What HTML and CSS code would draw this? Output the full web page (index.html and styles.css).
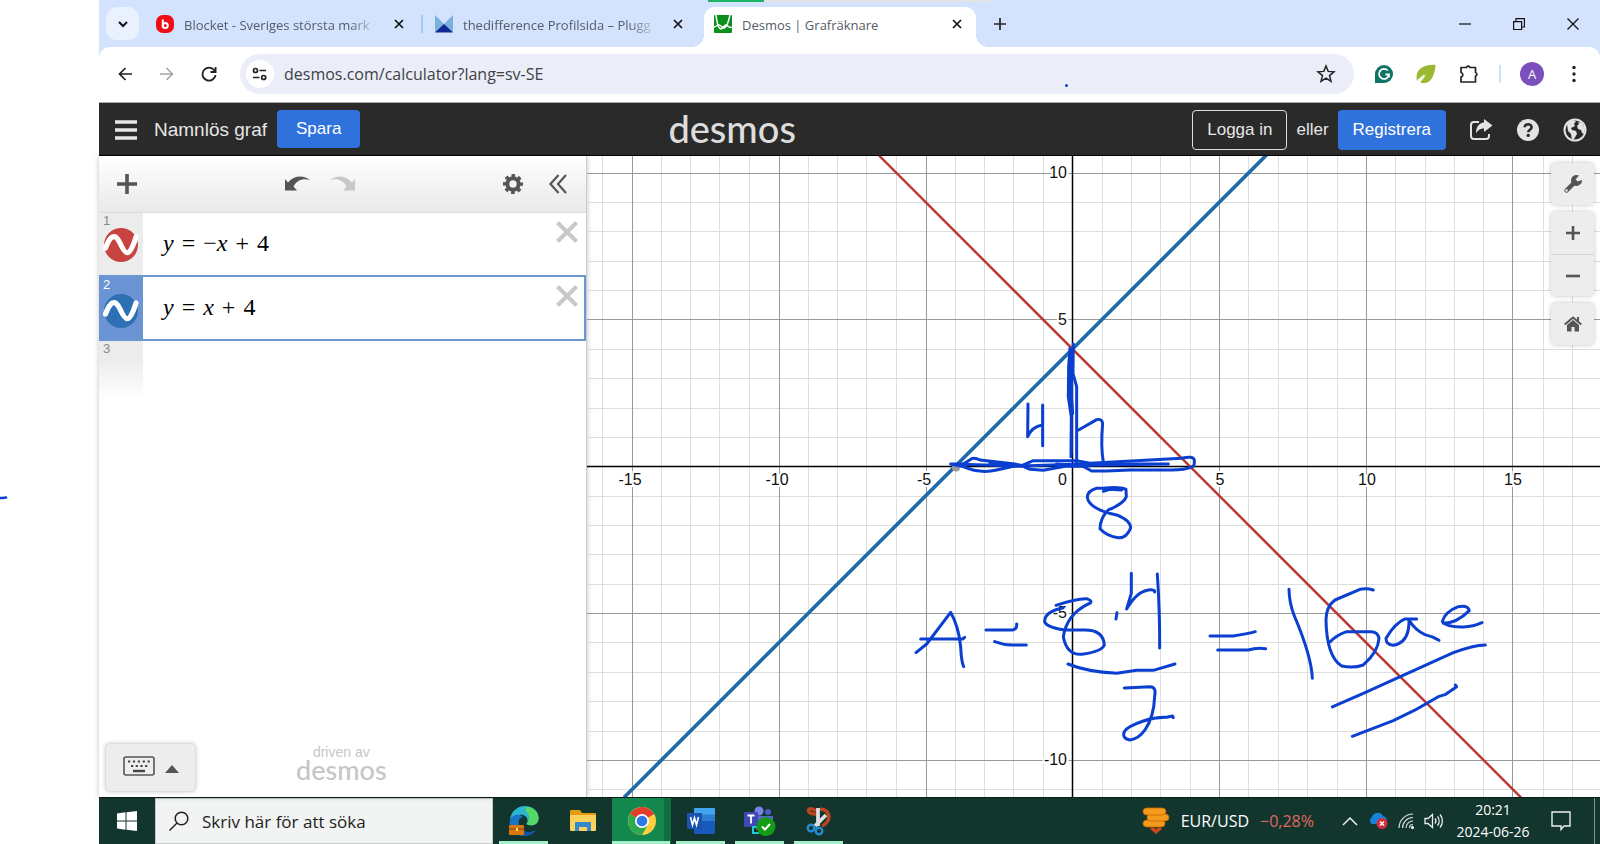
FILE: index.html
```html
<!DOCTYPE html>
<html lang="sv">
<head>
<meta charset="utf-8">
<title>Desmos | Grafräknare</title>
<meta name="viewport" content="width=device-width, initial-scale=1">
<link rel="stylesheet" href="styles.css">
</head>
<body>
<div class="screen">
  <header class="tabstrip">
    <button class="tab-search" aria-label="Sök flikar"><svg width="12" height="12" viewBox="0 0 12 12"><path d="M2 4l4 4 4-4" fill="none" stroke="#111" stroke-width="2"/></svg></button>
    <div class="tab">
      <svg class="favicon" width="18" height="18" viewBox="0 0 18 18"><rect width="18" height="18" rx="7" fill="#f00d16"/><path d="M6.800 4.500v8" stroke="#fff" stroke-width="2"/><circle cx="9.300" cy="10.500" r="2.500" fill="none" stroke="#fff" stroke-width="2"/></svg>
      <span class="tab-title fade">Blocket - Sveriges största mark</span>
      <button class="tab-close" aria-label="Stäng"><svg width="12" height="12" viewBox="0 0 12 12"><path d="M2 2l8 8M10 2l-8 8" stroke="#111" stroke-width="1.700"/></svg></button>
    </div>
    <div class="tab">
      <svg class="favicon" width="18" height="18" viewBox="0 0 18 18"><path d="M0 0l9 9 9-9v17H0z" fill="#7bb0da"/><path d="M0 17.500L9 9l9 8.500z" fill="#102a92"/></svg>
      <span class="tab-title fade">thedifference Profilsida – Plugg</span>
      <button class="tab-close" aria-label="Stäng"><svg width="12" height="12" viewBox="0 0 12 12"><path d="M2 2l8 8M10 2l-8 8" stroke="#111" stroke-width="1.700"/></svg></button>
    </div>
    <div class="tab active">
      <svg class="favicon" width="18" height="18" viewBox="0 0 18 18"><rect width="18" height="18" rx="1" fill="#0a8f1c"/><path d="M2 0c1 9 3 14 5 14s3-4 5-4 3 4 6 2M16 0c-2 9-4 13-6 13s-3-3-5-3-3 2-5 2" fill="none" stroke="#fff" stroke-width="1.500"/></svg>
      <span class="tab-title">Desmos | Grafräknare</span>
      <button class="tab-close" aria-label="Stäng"><svg width="12" height="12" viewBox="0 0 12 12"><path d="M2 2l8 8M10 2l-8 8" stroke="#111" stroke-width="1.700"/></svg></button>
    </div>
    <button class="new-tab" aria-label="Ny flik"><svg width="14" height="14" viewBox="0 0 14 14"><path d="M7 1v12M1 7h12" stroke="#222" stroke-width="1.700"/></svg></button>
    <div class="window-controls">
      <button aria-label="Minimera"><svg width="12" height="12" viewBox="0 0 12 12"><path d="M0 6h12" stroke="#111" stroke-width="1.200"/></svg></button>
      <button aria-label="Återställ"><svg width="12" height="12" viewBox="0 0 12 12"><path d="M.6 3.600h8v8h-8zM3 3V.6h8.400V9H9" fill="none" stroke="#111" stroke-width="1.200"/></svg></button>
      <button aria-label="Stäng fönster"><svg width="12" height="12" viewBox="0 0 12 12"><path d="M.5.5l11 11M11.500.5l-11 11" stroke="#111" stroke-width="1.300"/></svg></button>
    </div>
  </header>

  <div class="toolbar-bg">
  <nav class="toolbar">
    <button class="tool" aria-label="Bakåt"><svg width="14" height="14" viewBox="0 0 14 14"><path d="M14 7H1.500M7.500 1l-6 6 6 6" fill="none" stroke="#222" stroke-width="1.700"/></svg></button>
    <button class="tool" aria-label="Framåt"><svg width="14" height="14" viewBox="0 0 14 14"><path d="M0 7h12.500M6.500 1l6 6-6 6" fill="none" stroke="#a3a5a8" stroke-width="1.600"/></svg></button>
    <button class="tool" aria-label="Läs in igen"><svg width="16" height="16" viewBox="0 0 16 16"><path d="M14 5.500A6.500 6.500 0 1 0 14.500 9M14.600 1v5H9.500" fill="none" stroke="#222" stroke-width="1.800"/></svg></button>
    <div class="omnibox">
      <button class="site-info" aria-label="Webbplatsinformation"><svg width="16" height="14" viewBox="0 0 16 14"><g fill="none" stroke="#222" stroke-width="1.700"><circle cx="3.500" cy="3.500" r="2"/><path d="M7.500 3.500H14M1 10.500h6.500"/><circle cx="11.700" cy="10.500" r="2"/></g></svg></button>
      <input class="url" type="text" aria-label="Adressfält" value="desmos.com/calculator?lang=sv-SE">
      <button class="star" aria-label="Bokmärk"><svg width="20" height="20" viewBox="0 0 20 20"><path d="M10 2l2.200 5.400 5.800.4-4.500 3.800 1.500 5.800-5-3.200-5 3.200 1.500-5.800L2 7.800l5.800-.4z" fill="none" stroke="#222" stroke-width="1.500"/></svg></button>
    </div>
    <button class="tool" aria-label="Grammarly"><svg width="18" height="18" viewBox="0 0 18 18"><path d="M9 0a9 9 0 1 1 0 18H0V9a9 9 0 0 1 9-9z" fill="#0f7465"/><path d="M12.700 5.500A5 5 0 1 0 14 9.500h-3.500M13.900 9.500v3" fill="none" stroke="#fff" stroke-width="1.800"/></svg></button>
    <button class="tool" aria-label="Tillägg"><svg width="20" height="20" viewBox="0 0 20 20"><path d="M1 17C-1 8 4 0 19.500.8 19 12 14 22 4 18.500l6-7z" fill="#99b933"/><path d="M1.500 16.500l7-5.500" stroke="#fff" stroke-width="1.500"/></svg></button>
    <button class="tool" aria-label="Alla tillägg"><svg width="22" height="20" viewBox="0 0 22 20"><path d="M4 3.500h5.500a1.800 1.800 0 0 1 3.500 0H18.500V8.500a1.800 1.800 0 0 1 0 3.500V18H4v-5a2.300 2.300 0 0 0 0-4.500z" fill="none" stroke="#222" stroke-width="1.700" stroke-linejoin="round"/></svg></button>
    <span class="tool-divider"></span>
    <button class="tool" aria-label="Profil"><span class="avatar">A</span></button>
    <button class="tool" aria-label="Meny"><svg width="4" height="18" viewBox="0 0 4 18"><g fill="#222"><circle cx="2" cy="2.500" r="1.700"/><circle cx="2" cy="9" r="1.700"/><circle cx="2" cy="15.500" r="1.700"/></g></svg></button>
  </nav>
  </div>

  <header class="app-header">
    <button class="menu" aria-label="Öppna graf"><svg width="22" height="20" viewBox="0 0 22 20"><path d="M0 2h22M0 10h22M0 18h22" stroke="#e6e6e6" stroke-width="3.400"/></svg></button>
    <span class="graph-name">Namnlös graf</span>
    <button class="btn primary save">Spara</button>
    <span class="logo">desmos</span>
    <div class="account">
      <button class="btn outline">Logga in</button>
      <span class="or">eller</span>
      <button class="btn primary">Registrera</button>
    </div>
    <div class="header-icons">
      <button aria-label="Dela"><svg width="24" height="22" viewBox="0 0 24 22"><path d="M10 3H5a3 3 0 0 0-3 3v11a3 3 0 0 0 3 3h12a3 3 0 0 0 3-3v-2" fill="none" stroke="#e3e3e3" stroke-width="2"/><path d="M15 0l8.500 6.500L15 13V9.500c-4 0-6 1.500-8 5C7 8 10 4 15 3.600z" fill="#e3e3e3"/></svg></button>
      <button aria-label="Hjälp"><svg width="22" height="22" viewBox="0 0 22 22"><circle cx="11" cy="11" r="11" fill="#e3e3e3"/><path d="M7.600 8.300c.2-4 7-4 7-.1 0 2.500-3.400 2.500-3.400 5" fill="none" stroke="#2a2a2a" stroke-width="2.600"/><circle cx="11.200" cy="16.400" r="1.700" fill="#2a2a2a"/></svg></button>
      <button aria-label="Språk"><svg width="24" height="24" viewBox="0 0 24 24"><circle cx="12" cy="12" r="10.500" fill="none" stroke="#e3e3e3" stroke-width="2"/><path d="M4 6l5-4 4 1-2 3 1 2-4 2 1 2 4 1 1 3-3 5-2 1-1-6-3-3zM15 4l4 1 3 6-1 5-2-1-1-3-3-1-1-3 2-2z" fill="#e3e3e3"/></svg></button>
    </div>
  </header>

  <main class="calculator">
    <section class="expressions">
      <div class="exp-toolbar">
        <button class="add" aria-label="Lägg till"><svg width="20" height="20" viewBox="0 0 20 20"><path d="M10 0v20M0 10h20" stroke="#555" stroke-width="3.600"/></svg></button>
        <div class="history">
          <button aria-label="Ångra"><svg width="25" height="16" viewBox="0 0 25 16"><path d="M0 3l3 3.500C9-1 19-1 25 4 18 2 12 4 8.500 10.500L12 14.500H0z" fill="#555"/></svg></button>
          <button aria-label="Gör om"><svg width="25" height="16" viewBox="0 0 25 16"><path d="M25 3l-3 3.500C16-1 6-1 0 4c7-2 13 0 16.500 6.500L13 14.500h12z" fill="#c8c8c8"/></svg></button>
        </div>
        <div class="panel-actions">
          <button aria-label="Redigera lista"><svg width="20" height="20" viewBox="0 0 20 20"><circle cx="10" cy="10" r="5.700" fill="none" stroke="#555" stroke-width="4"/><circle cx="10" cy="10" r="8.500" fill="none" stroke="#555" stroke-width="3" stroke-dasharray="3.600 3.076" stroke-dashoffset="1.800"/></svg></button>
          <button aria-label="Dölj lista"><svg width="18" height="20" viewBox="0 0 18 20"><path d="M9.500 1L1.500 10l8 9M17 1l-8 9 8 9" fill="none" stroke="#555" stroke-width="2.200"/></svg></button>
        </div>
      </div>

      <div class="expression">
        <div class="gutter"><span>1</span>
          <button aria-label="Dölj graf 1"><svg width="36" height="34" viewBox="0 0 36 34"><circle cx="18" cy="17" r="17" fill="#c74440"/><path d="M2.500 20C7 8 12 4 17 15s9 17 16-6" fill="none" stroke="#fff" stroke-width="5.200" stroke-linecap="round"/></svg></button>
        </div>
        <div class="math" role="textbox" tabindex="0" aria-label="Uttryck 1"><i>y</i><span>=</span><span>−<i>x</i></span><span>+</span><span>4</span></div>
        <button class="remove" aria-label="Ta bort 1"><svg width="22" height="22" viewBox="0 0 22 22"><path d="M1.500 1.500l19 19M20.500 1.500l-19 19" stroke="#c8c8c8" stroke-width="4"/></svg></button>
      </div>
      <div class="expression selected">
        <div class="gutter"><span>2</span>
          <button aria-label="Dölj graf 2"><svg width="36" height="34" viewBox="0 0 36 34"><circle cx="18" cy="17" r="17" fill="#2d70b3"/><path d="M2.500 20C7 8 12 4 17 15s9 17 16-6" fill="none" stroke="#fff" stroke-width="5.200" stroke-linecap="round"/></svg></button>
        </div>
        <div class="math" role="textbox" tabindex="0" aria-label="Uttryck 2"><i>y</i><span>=</span><i>x</i><span>+</span><span>4</span></div>
        <button class="remove" aria-label="Ta bort 2"><svg width="22" height="22" viewBox="0 0 22 22"><path d="M1.500 1.500l19 19M20.500 1.500l-19 19" stroke="#c8c8c8" stroke-width="4"/></svg></button>
      </div>
      <div class="expression empty"><div class="gutter"><span>3</span></div></div>

      <footer class="panel-footer">
        <button class="keypad" aria-label="Visa tangentbord">
          <svg width="32" height="20" viewBox="0 0 32 20"><rect x="1" y="1" width="30" height="18" rx="2" fill="none" stroke="#555" stroke-width="1.600"/><path d="M5 5.500h22" stroke="#444" stroke-width="2.200" stroke-dasharray="2.200 2.700"/><path d="M8 10h17" stroke="#444" stroke-width="2.200" stroke-dasharray="2.200 2.500"/><path d="M10 15h12" stroke="#444" stroke-width="2.400"/></svg>
          <svg width="14" height="8" viewBox="0 0 14 8"><path d="M0 8l7-8 7 8z" fill="#555"/></svg>
        </button>
        <div class="powered"><span>driven av</span><span class="powered-logo">desmos</span></div>
      </footer>
    </section>

    <section class="graph">
      <svg class="plot" viewBox="587 156 1013 641" preserveAspectRatio="xMidYMid slice" role="img" aria-label="Graf av y = −x + 4 och y = x + 4">
        <path class="minor" d="M602.500 156v641M661.500 156v641M690.500 156v641M719.500 156v641M749.500 156v641M808.500 156v641M837.500 156v641M866.500 156v641M896.500 156v641M955.500 156v641M984.500 156v641M1013.500 156v641M1043.500 156v641M1102.500 156v641M1131.500 156v641M1160.500 156v641M1190.500 156v641M1248.500 156v641M1278.500 156v641M1307.500 156v641M1337.500 156v641M1395.500 156v641M1425.500 156v641M1454.500 156v641M1483.500 156v641M1543.500 156v641M1572.500 156v641"/>
        <path class="minor" d="M587 202.500h1013M587 231.500h1013M587 261.500h1013M587 290.500h1013M587 349.500h1013M587 378.500h1013M587 408.500h1013M587 437.500h1013M587 496.500h1013M587 525.500h1013M587 554.500h1013M587 584.500h1013M587 642.500h1013M587 672.500h1013M587 701.500h1013M587 731.500h1013M587 789.500h1013"/>
        <path class="major" d="M632.500 156v641M779.500 156v641M926.500 156v641M1219.500 156v641M1366.500 156v641M1512.500 156v641M587 173.500h1013M587 319.500h1013M587 613.500h1013M587 760.500h1013"/>
        <path class="axis" d="M1072.500 156v641M587 466.500h1013"/>
        <path d="M1072.500 349L624 797.500M1072.500 349L1268 153.500" stroke="#1e69ab" stroke-width="3.600"/>
        <path d="M879 155.500L1521.500 798" stroke="#bb3430" stroke-width="2.400"/>
        <g class="label">
          <g text-anchor="middle">
            <text x="630" y="485">-15</text><text x="777" y="485">-10</text><text x="924" y="485">-5</text>
            <text x="1220" y="485">5</text><text x="1367" y="485">10</text><text x="1513" y="485">15</text>
          </g>
          <g text-anchor="end">
            <text x="1067" y="485">0</text><text x="1067" y="178">10</text><text x="1067" y="325">5</text><text x="1067" y="618">-5</text><text x="1067" y="765">-10</text>
          </g>
        </g>
        <g class="ink">
          <circle cx="956" cy="467.500" r="4" fill="#999" stroke="none"/>
          <g transform="translate(900 330) scale(.3333)">
            <path d="M384 222L383 320Q396 290 427 285M428 225V347"/>
            <path d="M536 300L590 269Q606 265 608 280Q602 350 610 396"/>
            <path d="M510 55L506 110 505 200 514 260 513 380M520 42L519 130 530 170 530 400M515 60L514 370M508 120L518 250"/>
            <path d="M512 60L513 150" stroke-width="14"/>
            <path d="M152 402H190L215 386Q225 382 240 390L345 402 365 407 400 392H530L570 400 845 385Q880 376 883 390Q884 408 878 410Q850 422 800 420H690L620 423H575L550 409 500 408 430 421 390 418 365 407 340 409 290 420Q240 432 190 410Z"/>
            <path d="M180 403L365 408 545 402 805 402M560 406L805 402M270 399L390 408M470 402L560 408" stroke-width="11"/>
            <path d="M610 484L630 478 665 480M628 475H590Q563 482 562 502Q564 520 590 535Q610 547 650 555Q692 572 692 594Q680 625 655 623Q620 618 600 596Q600 565 625 540Q672 520 679 500L678 478Q660 470 615 474"/>
          </g>
          <g transform="translate(900 550) scale(.3333)">
            <path d="M48 308L80 282 152 187Q176 230 182 290Q184 335 191 350M62 267H188L194 262"/>
            <path d="M258 240H338Q352 237 350 222M284 275Q310 285 335 285H379"/>
            <path d="M468 166Q530 145 560 146Q585 155 562 163Q500 195 490 260Q500 315 545 313Q605 305 613 285Q610 240 555 240H495Q430 230 434 210Q438 184 490 173"/>
            <path d="M651 188L648 207M694 70V130L680 177Q710 125 745 120Q765 118 764 126M772 72Q780 190 779 294"/>
            <path d="M504 342Q560 365 650 370Q680 366 710 361H760L825 342"/>
            <path d="M673 414L750 410Q770 410 764 440Q762 500 735 540Q715 568 690 570Q665 565 673 545Q680 530 730 513Q765 501 800 502L818 498 820 503"/>
          </g>
          <g transform="translate(1190 560) scale(.3333)">
            <path d="M60 228H130Q170 222 196 215M83 270H175Q200 262 227 266"/>
            <path d="M297 88Q298 130 312 165Q365 290 367 355"/>
            <path d="M550 90Q530 84 510 88L435 120Q408 140 408 180Q410 290 455 318Q490 326 520 315Q565 275 567 235Q564 216 545 215H470Q440 225 420 246"/>
            <path d="M680 177H645Q615 190 588 235Q588 255 610 256Q655 248 657 190V180Q675 210 705 224Q730 230 747 241"/>
            <path d="M760 190Q800 190 838 152Q835 135 805 140Q765 155 757 185Q770 202 820 201Q850 200 876 188"/>
            <path d="M427 441L520 400 790 278Q850 256 886 255M487 529L610 482Q680 450 745 410L765 404 800 380 796 375"/>
          </g>
        </g>
      </svg>
      <div class="view-controls">
        <button class="control" aria-label="Inställningar"><svg width="20" height="20" viewBox="0 0 20 20"><path d="M3.500 16.500L12 8" stroke="#555" stroke-width="4.500" stroke-linecap="round"/><path d="M16 1.500A5.500 5.500 0 1 0 19 6l-4.500 1.500-2-2z" fill="#555"/><circle cx="3.500" cy="16.500" r="1.300" fill="#eee"/></svg></button>
        <div class="zoom-group">
          <button class="control" aria-label="Zooma in"><svg width="14" height="14" viewBox="0 0 14 14"><path d="M7 0v14M0 7h14" stroke="#555" stroke-width="2.600"/></svg></button>
          <button class="control" aria-label="Zooma ut"><svg width="14" height="14" viewBox="0 0 14 14"><path d="M0 7h14" stroke="#555" stroke-width="2.600"/></svg></button>
        </div>
        <button class="control" aria-label="Standardvy"><svg width="18" height="16" viewBox="0 0 18 16"><path d="M.7 8.500L9 1.500l8.300 7M14 1v4" fill="none" stroke="#555" stroke-width="2"/><path d="M3 9l6-5 6 5v6.500h-4.500V11h-3v4.500H3z" fill="#555"/></svg></button>
      </div>
    </section>
  </main>

  <footer class="taskbar">
    <button class="start" aria-label="Start"><svg width="20" height="20" viewBox="0 0 20 20"><path d="M0 2.500L8.500 1.300V9.500H0zM9.500 1.200L20 0v9.500H9.500zM0 10.500h8.500v8.200L0 17.500zM9.500 10.500H20V20L9.500 18.800z" fill="#fff"/></svg></button>
    <label class="search"><svg width="20" height="20" viewBox="0 0 20 20"><circle cx="12.500" cy="7.500" r="6.300" fill="none" stroke="#222" stroke-width="1.500"/><path d="M8 12l-7.500 7.500" stroke="#222" stroke-width="1.500"/></svg><input type="text" placeholder="Skriv här för att söka" aria-label="Skriv här för att söka"></label>
    <div class="apps">
      <button class="app running" aria-label="Edge"><svg width="30" height="30" viewBox="0 0 30 30"><path d="M1 14C3-4 27-4 29.500 11c1 8-8 10-12 7 3-5-1-10-7-9C5 9.500 2 12 1 14z" fill="#2cb4d2"/><path d="M17 .8C24 1 29 5 29.500 11c1 8-8 10-12 7 4-4 3-10-1-13z" fill="#55d867"/><path d="M1 14c2-5 8-7 13-3-4 1-5 4-4 8 2 7 10 9 17 5-5 8-19 8-24-1-2-3-3-6-2-9z" fill="#1675c8"/><path d="M10 19c2 7 10 9 17 5-4 6-12 7-18 4-2-2-2-6 1-9z" fill="#1550a5"/><rect x="0" y="19" width="15" height="10" rx="1" fill="#d9760d"/><path d="M0 23h15" stroke="#87400a"/><path d="M7 22h2v3H7z" fill="#ffe071"/></svg></button>
      <button class="app" aria-label="Utforskaren"><svg width="26" height="22" viewBox="0 0 26 22"><path d="M0 1q0-1 1-1h9l2 3h13q1 0 1 1v16H0z" fill="#e39a10"/><path d="M0 5h26v15q0 1-1 1H1q-1 0-1-1z" fill="#fbd15b"/><path d="M5 21v-8q0-1 1-1h14q1 0 1 1v8h-4v-4H9v4z" fill="#3488cf"/></svg></button>
      <button class="app running current" aria-label="Chrome"><svg width="28" height="28" viewBox="0 0 28 28"><circle cx="14" cy="14" r="14" fill="#ffcd40"/><path d="M14 14L2 7a14 14 0 0 1 24.200 0z" fill="#e33b2e"/><path d="M14 14L2 7a14 14 0 0 0 12 21l6-10.500z" fill="#2da94f"/><circle cx="14" cy="14" r="7" fill="#fff"/><circle cx="14" cy="14" r="5.300" fill="#2f78e8"/></svg></button>
      <button class="app running" aria-label="Word"><svg width="28" height="26" viewBox="0 0 28 26"><rect x="7" width="21" height="26" rx="1.500" fill="#185abd"/><path d="M7 1q0-1 1-1h19q1 0 1 1v6H7z" fill="#41a5ee"/><path d="M7 6.500h21V13H7z" fill="#2b7cd3"/><rect y="5" width="15" height="16" rx="1" fill="#1b52ad"/><path d="M3.500 9l2 8 2-7 2 7 2-8" fill="none" stroke="#fff" stroke-width="1.600"/></svg></button>
      <button class="app running" aria-label="Teams"><svg width="32" height="30" viewBox="0 0 32 30"><circle cx="15" cy="5" r="4.500" fill="#7b83eb"/><circle cx="24" cy="6" r="3" fill="#5059c9"/><path d="M10 10h19v6c0 13-19 14-19 0z" fill="#5c66d0"/><rect x="0" y="6" width="14" height="15" rx="1" fill="#4048b5"/><path d="M3.500 9.500h7M7 9.500v8" stroke="#fff" stroke-width="1.800"/><path d="M13 21H9v6h6" fill="none" stroke="#24c7d4" stroke-width="2"/><circle cx="22" cy="20.500" r="9.500" fill="#149c16"/><path d="M18 20.500l3 3 5-5.500" fill="none" stroke="#fff" stroke-width="2"/></svg></button>
      <button class="app running" aria-label="Skärmklippverktyget"><svg width="26" height="30" viewBox="0 0 26 30"><path d="M10 5C5 1 1 3 3 6c1 2 4 2 7 2M14 3c11 1 12 12 2 17" fill="none" stroke="#bf4421" stroke-width="3.500"/><path d="M12 2v18M20 9L9 20" stroke="#ddd" stroke-width="3.800"/><circle cx="5" cy="22" r="3.300" fill="none" stroke="#258bd0" stroke-width="2.400"/><circle cx="13" cy="25" r="3.300" fill="none" stroke="#258bd0" stroke-width="2.400"/></svg></button>
    </div>
    <div class="tray">
      <button class="ticker"><svg width="28" height="28" viewBox="0 0 28 28"><g stroke="#c56800" stroke-width=".8" fill="#f49a1c"><rect x="1" y="13" width="22" height="7" rx="4"/><rect x="5" y="7" width="22" height="7" rx="4"/><rect x="1" y="1" width="23" height="7" rx="4"/></g><path d="M8 22l6 5 6-5-2-2-4 2-4-2z" fill="#c74a1b"/></svg><span>EUR/USD</span><span class="down">−0,28%</span></button>
      <div class="tray-icons">
        <button aria-label="Visa dolda ikoner"><svg width="16" height="10" viewBox="0 0 16 10"><path d="M1 9l7-7 7 7" fill="none" stroke="#eee" stroke-width="1.500"/></svg></button>
        <button aria-label="OneDrive"><svg width="20" height="18" viewBox="0 0 20 18"><path d="M4 12a4 4 0 0 1 0-7 6 6 0 0 1 11-1 4.500 4.500 0 0 1 2 8z" fill="#1784dc"/><circle cx="14" cy="11.500" r="5.500" fill="#d32d3b"/><path d="M12 9.500l4 4M16 9.500l-4 4" stroke="#fff" stroke-width="1.500"/></svg></button>
        <button aria-label="Nätverk"><svg width="18" height="18" viewBox="0 0 18 18"><g fill="none" stroke="#ddd" stroke-width="1.200"><path d="M2 16A14 14 0 0 1 16 2"/><path d="M5.500 16A10.500 10.500 0 0 1 16 5.500"/><path d="M9 16a7 7 0 0 1 7-7"/><path d="M12.500 16a3.500 3.500 0 0 1 3.500-3.500"/></g><circle cx="15.500" cy="15.500" r="1.500" fill="#fff"/></svg></button>
        <button aria-label="Ljud"><svg width="20" height="16" viewBox="0 0 20 16"><path d="M1 5.500h3L8.500 1.500v13L4 10.500H1zM11 5.500a4 4 0 0 1 0 5M13.500 3.500a7 7 0 0 1 0 9M16 1.500a10 10 0 0 1 0 13" fill="none" stroke="#eee" stroke-width="1.300"/></svg></button>
      </div>
      <time class="clock"><span>20:21</span><span>2024-06-26</span></time>
      <button class="notify" aria-label="Aviseringar"><svg width="20" height="20" viewBox="0 0 20 20"><path d="M1 1h18v14h-6l-3 3.500V15H1z" fill="none" stroke="#eee" stroke-width="1.400"/></svg></button>
    </div>
  </footer>
</div>
<span class="share-strip"></span>
<span class="pen-dot toolbar-dot"></span>
<svg class="pen-mark" width="8" height="6" viewBox="0 0 8 6"><path d="M0 3h3l3-.5" fill="none" stroke="#0b3fd0" stroke-width="2.600" stroke-linecap="round"/></svg>
</body>
</html>
```
FILE: styles.css
```css
* { box-sizing: border-box; }
body {
  margin: 0;
  background: #fff;
  color: #222;
  font-family: "Open Sans", "Noto Sans", sans-serif;
  font-size: 16px;
}
button {
  display: flex;
  align-items: center;
  justify-content: center;
  padding: 0;
  border: 0;
  background: none;
  font: inherit;
  color: inherit;
}
input { font: inherit; color: inherit; border: 0; background: none; padding: 0; outline: 0; min-width: 0; }
svg { display: block; flex: none; }

.screen {
  display: flex;
  flex-direction: column;
  min-height: 100vh;
  margin-left: 99px;
}

/* browser tabs */
.tabstrip {
  display: flex;
  align-items: flex-end;
  height: 47px;
  padding-left: 7px;
  background: #d3e3fd;
}
.tab-search {
  width: 33px;
  height: 33px;
  margin: 0 7px 7px 0;
  border-radius: 11px;
  background: #e9f1fe;
}
.tab {
  position: relative;
  display: flex;
  align-items: center;
  gap: 10px;
  width: 279px;
  height: 40px;
  padding: 0 0 6px 10px;
  font-size: 13px;
  color: #555c68;
}
.tab:not(.active) + .tab:not(.active)::before {
  content: "";
  position: absolute;
  left: -4px;
  top: 8px;
  width: 2px;
  height: 18px;
  background: #a4c8f5;
}
.tab-title { width: 197px; padding-top: 2px; overflow: hidden; white-space: nowrap; line-height: 20px; }
.fade {
  -webkit-mask-image: linear-gradient(to right, #000 84%, transparent 99%);
  mask-image: linear-gradient(to right, #000 84%, transparent 99%);
}
.tab-close { width: 16px; height: 16px; }
.active { width: 272px; border-radius: 11px 11px 0 0; background: #fff; }
.active::before, .active::after {
  content: "";
  position: absolute;
  bottom: 0;
  width: 12px;
  height: 12px;
}
.active::before { left: -12px; background: radial-gradient(circle at 0 0, transparent 12px, #fff 12px); }
.active::after { right: -12px; background: radial-gradient(circle at 100% 0, transparent 12px, #fff 12px); }
.new-tab { width: 24px; height: 24px; margin: 0 0 11px 12px; }
.window-controls { display: flex; align-self: stretch; margin-left: auto; }
.window-controls button { width: 54px; }

/* address bar */
.toolbar-bg { background: #d3e3fd; }
.toolbar {
  display: flex;
  align-items: center;
  height: 55px;
  padding: 0 5px 1px;
  border-radius: 11px 11px 0 0;
  background: #fff;
}
.tool { width: 42px; height: 40px; flex: none; }
.omnibox {
  display: flex;
  align-items: center;
  flex: 1;
  height: 40px;
  margin: 0 9px 0 10px;
  padding: 0 18px 0 6px;
  border-radius: 20px;
  background: #ebeef8;
}
.site-info { width: 28px; height: 28px; border-radius: 50%; background: #fff; }
.url { flex: 1; margin-left: 10px; color: #3f4145; }
.tool-divider { flex: none; width: 2px; height: 18px; margin: 0 10px; background: #d0e2fb; }
.avatar {
  width: 24px;
  height: 24px;
  border-radius: 50%;
  background: #7b4fbc;
  color: #fff;
  font-size: 13px;
  line-height: 24px;
  text-align: center;
}

/* calculator header */
.app-header {
  display: flex;
  align-items: center;
  height: 54px;
  padding: 1px 2px 0 16px;
  border-top: 1px solid #aaa;
  border-bottom: 1px solid #000;
  background: #2a2a2a;
  color: #e6e6e6;
  font-family: "Liberation Sans", Arial, sans-serif;
}
.graph-name { margin-left: 17px; font-size: 19px; white-space: nowrap; }
.btn { height: 40px; border-radius: 4px; font-size: 17px; white-space: nowrap; }
.primary { background: #2f72dc; color: #fff; padding: 0 15px; }
.save { height: 38px; margin: 0 0 2px 10px; padding: 0 19px; }
.outline { border: 1px solid #ddd; padding: 0 14px; }
.logo { margin: 0 0 4px 308px; font: 500 38px/44px Lato, sans-serif; color: #ddd; }
.account { display: flex; align-items: center; gap: 9px; margin-left: auto; font-size: 17px; }
.header-icons { display: flex; margin-left: 11px; }
.header-icons button { width: 47px; height: 40px; }

/* expression list */
.calculator { display: flex; flex: 1; }
.expressions {
  position: relative;
  display: flex;
  flex-direction: column;
  flex: 0 0 488px;
  background: #fff;
  border-right: 1px solid #ccc;
  box-shadow: 0 0 5px rgba(0, 0, 0, .25);
  font-family: "Liberation Sans", Arial, sans-serif;
}
.exp-toolbar {
  display: flex;
  align-items: center;
  justify-content: space-between;
  height: 57px;
  padding: 0 19px 0 18px;
  border-bottom: 1px solid #ddd;
  background: linear-gradient(#fff, #e9e9e9);
}
.history { display: flex; gap: 20px; }
.panel-actions { display: flex; gap: 26px; }
.expression {
  display: flex;
  height: 62px;
}
.gutter {
  flex: 0 0 44px;
  padding: 1px 0 0 4px;
  background: #ececec;
  color: #888;
  font-size: 13px;
  line-height: 14px;
}
.math {
  display: flex;
  align-items: center;
  flex: 1;
  gap: 8px;
  padding: 0 0 3px 20px;
  font: 24px/30px "Liberation Serif", "Times New Roman", serif;
  color: #000;
}
.remove { align-self: flex-start; width: 22px; height: 22px; margin: 8px 8px 0 0; }
.selected { height: 66px; border: 2px solid #6c96d2; border-left: 0; }
.selected .gutter { background: #6a94d4; color: #fff; }
.selected .gutter button { margin-top: 2px; }
.selected .remove { margin-right: 6px; }
.empty .gutter { height: 60px; background: linear-gradient(#ececec 30%, #fff); }
.panel-footer { display: flex; align-items: flex-end; margin-top: auto; padding: 0 6px 5px; }
.keypad {
  gap: 10px;
  width: 91px;
  height: 49px;
  padding-bottom: 4px;
  border: 1px solid #ddd;
  border-radius: 5px;
  background: #ededed;
  box-shadow: 0 0 4px rgba(0, 0, 0, .2);
}
.keypad svg + svg { margin-top: 6px; }
.powered {
  display: flex;
  flex-direction: column;
  align-items: center;
  margin: 0 0 12px 100px;
  color: #c6c6c6;
  font-size: 14px;
  line-height: 14px;
}
.powered-logo { font: 500 27px/21px Lato, sans-serif; }

/* graph paper */
.graph { position: relative; flex: 1; min-width: 0; }
.plot { position: absolute; width: 100%; height: 100%; }
.minor { stroke: #dedede; }
.major { stroke: #999; }
.axis { stroke: #000; stroke-width: 1.5; }
.label {
  font: 16px "Liberation Sans", Arial, sans-serif;
  fill: #111;
  stroke: #fff;
  stroke-width: 4px;
  paint-order: stroke;
}
.ink path {
  fill: none;
  stroke: #0b3fd0;
  stroke-width: 9px;
  stroke-linecap: round;
  stroke-linejoin: round;
}
.view-controls {
  position: absolute;
  top: 7px;
  right: 6px;
  display: flex;
  flex-direction: column;
  gap: 7px;
}
.control, .zoom-group {
  width: 43px;
  border-radius: 5px;
  background: #ededed;
  box-shadow: 0 0 4px rgba(0, 0, 0, .25);
}
.control { height: 42px; }
.zoom-group .control { box-shadow: none; }
.zoom-group .control + .control { border-top: 1px solid #d5d5d5; border-radius: 0 0 5px 5px; }

/* desktop taskbar */
.taskbar { display: flex; height: 47px; background: #12362d; color: #fff; border-top: 1px solid #0a1f1a; }
.start { width: 56px; }
.search {
  display: flex;
  align-items: center;
  gap: 13px;
  width: 338px;
  padding-left: 13px;
  border: 1px solid #c9cccb;
  background: #f2f3f3;
  color: #222;
  font-size: 17px;
}
.search input { flex: 1; }
.search input::placeholder { color: #222; opacity: 1; }
.apps { display: flex; margin-left: 1px; }
.app { position: relative; width: 59px; }
.running::after {
  content: "";
  position: absolute;
  left: 5px;
  right: 5px;
  bottom: 0;
  height: 3px;
  background: #a5f0cb;
}
.current { background: linear-gradient(to right, #12884e 52px, #0f6d40 52px); }
.current::after { left: 0; right: 1px; }
.tray {
  position: relative;
  display: flex;
  align-items: center;
  margin-left: auto;
  padding-right: 5px;
}
.tray::after { content: ""; position: absolute; right: 5px; top: 0; bottom: 0; width: 1px; background: #7e918b; }
.ticker { gap: 11px; }
.down { color: #e0675d; }
.tray-icons { display: flex; margin-left: 22px; }
.tray-icons button { width: 28px; height: 30px; }
.clock {
  display: flex;
  flex-direction: column;
  align-items: center;
  width: 90px;
  font-size: 14px;
  line-height: 22px;
}
.notify { width: 46px; height: 40px; margin-right: 11px; }

/* overlays */
.share-strip {
  position: absolute;
  top: 0;
  left: 708px;
  width: 284px;
  height: 2px;
  background: linear-gradient(to right, #1eb564 56px, #e2e4e6 56px);
}
.pen-dot { position: absolute; width: 3px; height: 3px; border-radius: 50%; background: #0b3fd0; }
.toolbar-dot { left: 1065px; top: 84px; }
.pen-mark { position: absolute; left: 0; top: 495px; }
```
